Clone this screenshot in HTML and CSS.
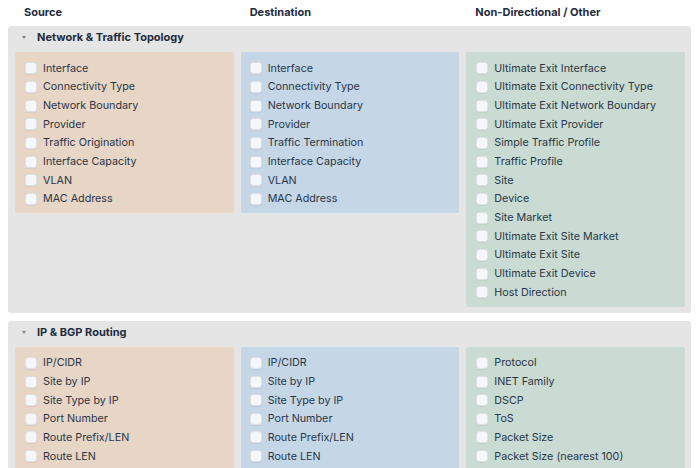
FILE: index.html
```html
<!DOCTYPE html>
<html>
<head>
<meta charset="utf-8">
<link rel="stylesheet" href="styles.css">
</head>
<body>
<div class="page">
  <div class="col-heads">
    <div class="col-head">Source</div>
    <div class="col-head">Destination</div>
    <div class="col-head">Non-Directional / Other</div>
  </div>

  <div class="section">
    <div class="section-head"><span class="caret"></span>Network &amp; Traffic Topology</div>
    <div class="cols">
      <div class="col src">
        <label class="item"><span class="cb"></span>Interface</label>
        <label class="item"><span class="cb"></span>Connectivity Type</label>
        <label class="item"><span class="cb"></span>Network Boundary</label>
        <label class="item"><span class="cb"></span>Provider</label>
        <label class="item"><span class="cb"></span>Traffic Origination</label>
        <label class="item"><span class="cb"></span>Interface Capacity</label>
        <label class="item"><span class="cb"></span>VLAN</label>
        <label class="item"><span class="cb"></span>MAC Address</label>
      </div>
      <div class="col dst">
        <label class="item"><span class="cb"></span>Interface</label>
        <label class="item"><span class="cb"></span>Connectivity Type</label>
        <label class="item"><span class="cb"></span>Network Boundary</label>
        <label class="item"><span class="cb"></span>Provider</label>
        <label class="item"><span class="cb"></span>Traffic Termination</label>
        <label class="item"><span class="cb"></span>Interface Capacity</label>
        <label class="item"><span class="cb"></span>VLAN</label>
        <label class="item"><span class="cb"></span>MAC Address</label>
      </div>
      <div class="col oth">
        <label class="item"><span class="cb"></span>Ultimate Exit Interface</label>
        <label class="item"><span class="cb"></span>Ultimate Exit Connectivity Type</label>
        <label class="item"><span class="cb"></span>Ultimate Exit Network Boundary</label>
        <label class="item"><span class="cb"></span>Ultimate Exit Provider</label>
        <label class="item"><span class="cb"></span>Simple Traffic Profile</label>
        <label class="item"><span class="cb"></span>Traffic Profile</label>
        <label class="item"><span class="cb"></span>Site</label>
        <label class="item"><span class="cb"></span>Device</label>
        <label class="item"><span class="cb"></span>Site Market</label>
        <label class="item"><span class="cb"></span>Ultimate Exit Site Market</label>
        <label class="item"><span class="cb"></span>Ultimate Exit Site</label>
        <label class="item"><span class="cb"></span>Ultimate Exit Device</label>
        <label class="item"><span class="cb"></span>Host Direction</label>
      </div>
    </div>
  </div>

  <div class="section">
    <div class="section-head"><span class="caret"></span>IP &amp; BGP Routing</div>
    <div class="cols">
      <div class="col src">
        <label class="item"><span class="cb"></span>IP/CIDR</label>
        <label class="item"><span class="cb"></span>Site by IP</label>
        <label class="item"><span class="cb"></span>Site Type by IP</label>
        <label class="item"><span class="cb"></span>Port Number</label>
        <label class="item"><span class="cb"></span>Route Prefix/LEN</label>
        <label class="item"><span class="cb"></span>Route LEN</label>
      </div>
      <div class="col dst">
        <label class="item"><span class="cb"></span>IP/CIDR</label>
        <label class="item"><span class="cb"></span>Site by IP</label>
        <label class="item"><span class="cb"></span>Site Type by IP</label>
        <label class="item"><span class="cb"></span>Port Number</label>
        <label class="item"><span class="cb"></span>Route Prefix/LEN</label>
        <label class="item"><span class="cb"></span>Route LEN</label>
      </div>
      <div class="col oth">
        <label class="item"><span class="cb"></span>Protocol</label>
        <label class="item"><span class="cb"></span>INET Family</label>
        <label class="item"><span class="cb"></span>DSCP</label>
        <label class="item"><span class="cb"></span>ToS</label>
        <label class="item"><span class="cb"></span>Packet Size</label>
        <label class="item"><span class="cb"></span>Packet Size (nearest 100)</label>
      </div>
    </div>
  </div>
</div>
</body>
</html>
```

FILE: styles.css
```css
html, body {
  margin: 0;
  padding: 0;
  background: #ffffff;
  overflow: hidden;
}
body {
  font-family: Inter, "Noto Sans", "Liberation Sans", sans-serif;
  color: #2a3647;
  font-size: 10.75px;
}
.page {
  padding: 0 9px 0 8px;
}
.col-heads {
  display: grid;
  grid-template-columns: 1fr 1fr 1fr;
  column-gap: 7px;
  padding: 0 6px 0 7px;
  height: 26px;
  align-items: center;
}
.col-head {
  padding-left: 9px;
  font-weight: 700;
  font-size: 11px;
  color: #1f2c3d;
  padding-bottom: 2px;
}
.section {
  background: #e5e5e5;
  border-radius: 3px;
  padding: 0 6px 6px 7px;
  margin-bottom: 8px;
}
.section-head {
  height: 26px;
  box-sizing: border-box;
  padding: 0 0 4px 7px;
  display: flex;
  align-items: center;
  font-weight: 700;
  font-size: 11px;
  color: #1f2c3d;
}
.caret {
  width: 0;
  height: 0;
  border-left: 2.5px solid transparent;
  border-right: 2.5px solid transparent;
  border-top: 3px solid #7b8593;
  margin-right: 11px;
  margin-top: 1px;
}
.cols {
  display: grid;
  grid-template-columns: 1fr 1fr 1fr;
  column-gap: 7px;
  align-items: start;
}
.col {
  padding: 7px 9px 5px 10px;
  border-radius: 2px;
}
.src { background: #e7d5c6; }
.dst { background: #c5d6e7; padding-left: 9px; }
.oth { background: #c9dbd2; padding-left: 10px; }
.item {
  display: flex;
  align-items: center;
  height: 18.67px;
  white-space: nowrap;
}
.cb {
  flex: none;
  box-sizing: border-box;
  width: 12px;
  height: 12px;
  border-radius: 3px;
  background: #f5f7fa;
  border: 1px solid #dde1e7;
  margin-right: 6px;
  box-shadow: 0 0.5px 1px rgba(0,0,0,0.05);
}
```
